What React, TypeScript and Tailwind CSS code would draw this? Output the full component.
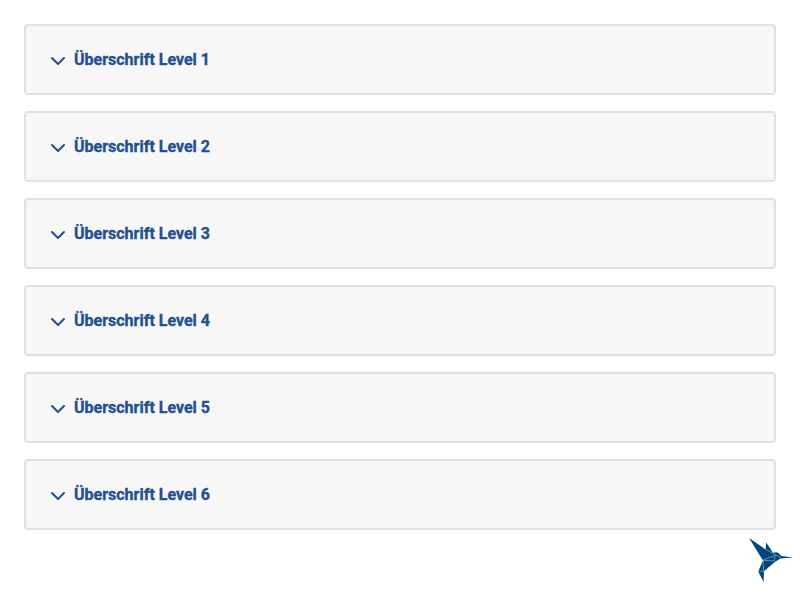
const levels = [1, 2, 3, 4, 5, 6];

function Chevron() {
  return (
    <svg className="mt-0.5 h-4 w-4 shrink-0" viewBox="0 0 16 16" fill="none" stroke="#254f90" strokeWidth="2" strokeLinecap="round" strokeLinejoin="round">
      <path d="M2 5l6 6 6-6" />
    </svg>
  );
}

function Hummingbird() {
  return (
    <svg className="absolute left-[744px] top-[534px] h-[50px] w-[50px]" viewBox="744 534 50 50">
      <path
        fill="#00457c"
        d="M749 538L765.6 549.4 766.2 542.4 773 552.8Q776.5 551.3 779 553.5L781.3 556 793.2 557.5 780.5 558.4 774.8 562 764 571.2 763.6 582 758.2 571.4 763 560.4z"
      />
      <g fill="none" stroke="#dbe6ee" strokeWidth="0.45">
        <path d="M763 560L775.2 555.3 774.3 560.9 763.3 560.4 763.5 571.3H758.2" />
        <path d="M765.5 549.5L773.2 553.2 780.8 558" />
      </g>
    </svg>
  );
}

export default function App() {
  return (
    <main className="relative h-[600px] w-[800px] overflow-hidden bg-white p-6 font-['Roboto','Liberation_Sans',sans-serif]">
      <div className="flex flex-col gap-4">
        {levels.map((level) => (
          <button key={level} type="button" className="flex h-[71px] w-full items-center gap-2 rounded border-2 border-[#e1e1e1] bg-[#f7f7f7] px-6 text-left text-base font-bold leading-6 text-[#254f90]">
            <Chevron />
            <span className="[-webkit-text-stroke:0.35px_#254f90]">Überschrift Level {level}</span>
          </button>
        ))}
      </div>
      <Hummingbird />
    </main>
  );
}
